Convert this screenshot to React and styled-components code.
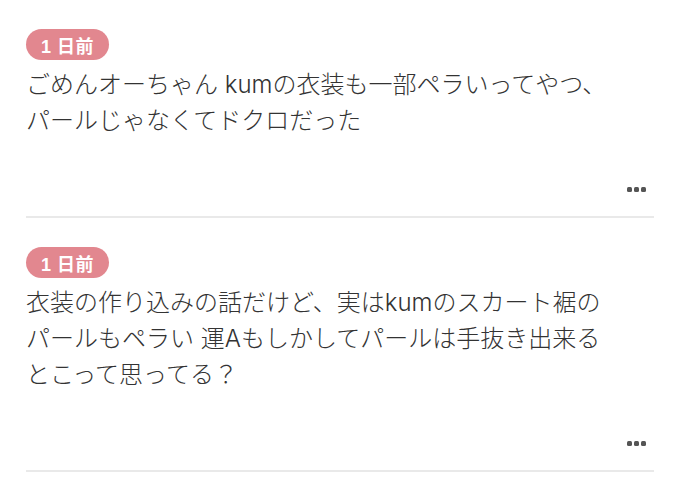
import React from 'react';
import styled, { createGlobalStyle } from 'styled-components';

const posts = [
  {
    id: 1,
    ago: '1 日前',
    lines: ['ごめんオーちゃん kumの衣装も一部ペラいってやつ、', 'パールじゃなくてドクロだった'],
  },
  {
    id: 2,
    ago: '1 日前',
    lines: [
      '衣装の作り込みの話だけど、実はkumのスカート裾の',
      'パールもペラい 運Aもしかしてパールは手抜き出来る',
      'とこって思ってる？',
    ],
  },
];

const GlobalStyle = createGlobalStyle`
  html, body {
    margin: 0;
    padding: 0;
    background: #ffffff;
  }
  body {
    font-family: Inter, 'Noto Sans CJK JP', sans-serif;
  }
`;

const Feed = styled.div`
  padding: 0 26px;
  background: #fff;
`;

const Post = styled.article`
  padding: 29px 0 24px;
  border-bottom: 2px solid #e9e9e9;
`;

const Badge = styled.span`
  display: inline-flex;
  align-items: center;
  height: 31px;
  padding: 0 15px;
  border-radius: 16px;
  background: #e2878f;
  color: #fff;
  font-family: 'Liberation Sans', 'Noto Sans CJK JP', sans-serif;
  font-size: 18px;
  font-weight: 700;
  letter-spacing: 0.5px;
`;

const Body = styled.p`
  margin: 7px 0 0;
  font-size: 24px;
  font-weight: 300;
  line-height: 36px;
  color: #333;
`;

const Footer = styled.div`
  display: flex;
  justify-content: flex-end;
  margin-top: 48px;
  padding-right: 8px;
`;

const MoreButton = styled.button`
  display: flex;
  gap: 2px;
  padding: 0;
  border: none;
  background: none;
  cursor: pointer;
  span {
    width: 5px;
    height: 5px;
    border-radius: 1.5px;
    background: #555;
  }
`;

export default function App() {
  return (
    <>
      <GlobalStyle />
      <Feed>
        {posts.map((post) => (
          <Post key={post.id}>
            <Badge>{post.ago}</Badge>
            <Body>
              {post.lines.map((line, i) => (
                <React.Fragment key={i}>
                  {i > 0 && <br />}
                  {line}
                </React.Fragment>
              ))}
            </Body>
            <Footer>
              <MoreButton aria-label="more">
                <span />
                <span />
                <span />
              </MoreButton>
            </Footer>
          </Post>
        ))}
      </Feed>
    </>
  );
}
